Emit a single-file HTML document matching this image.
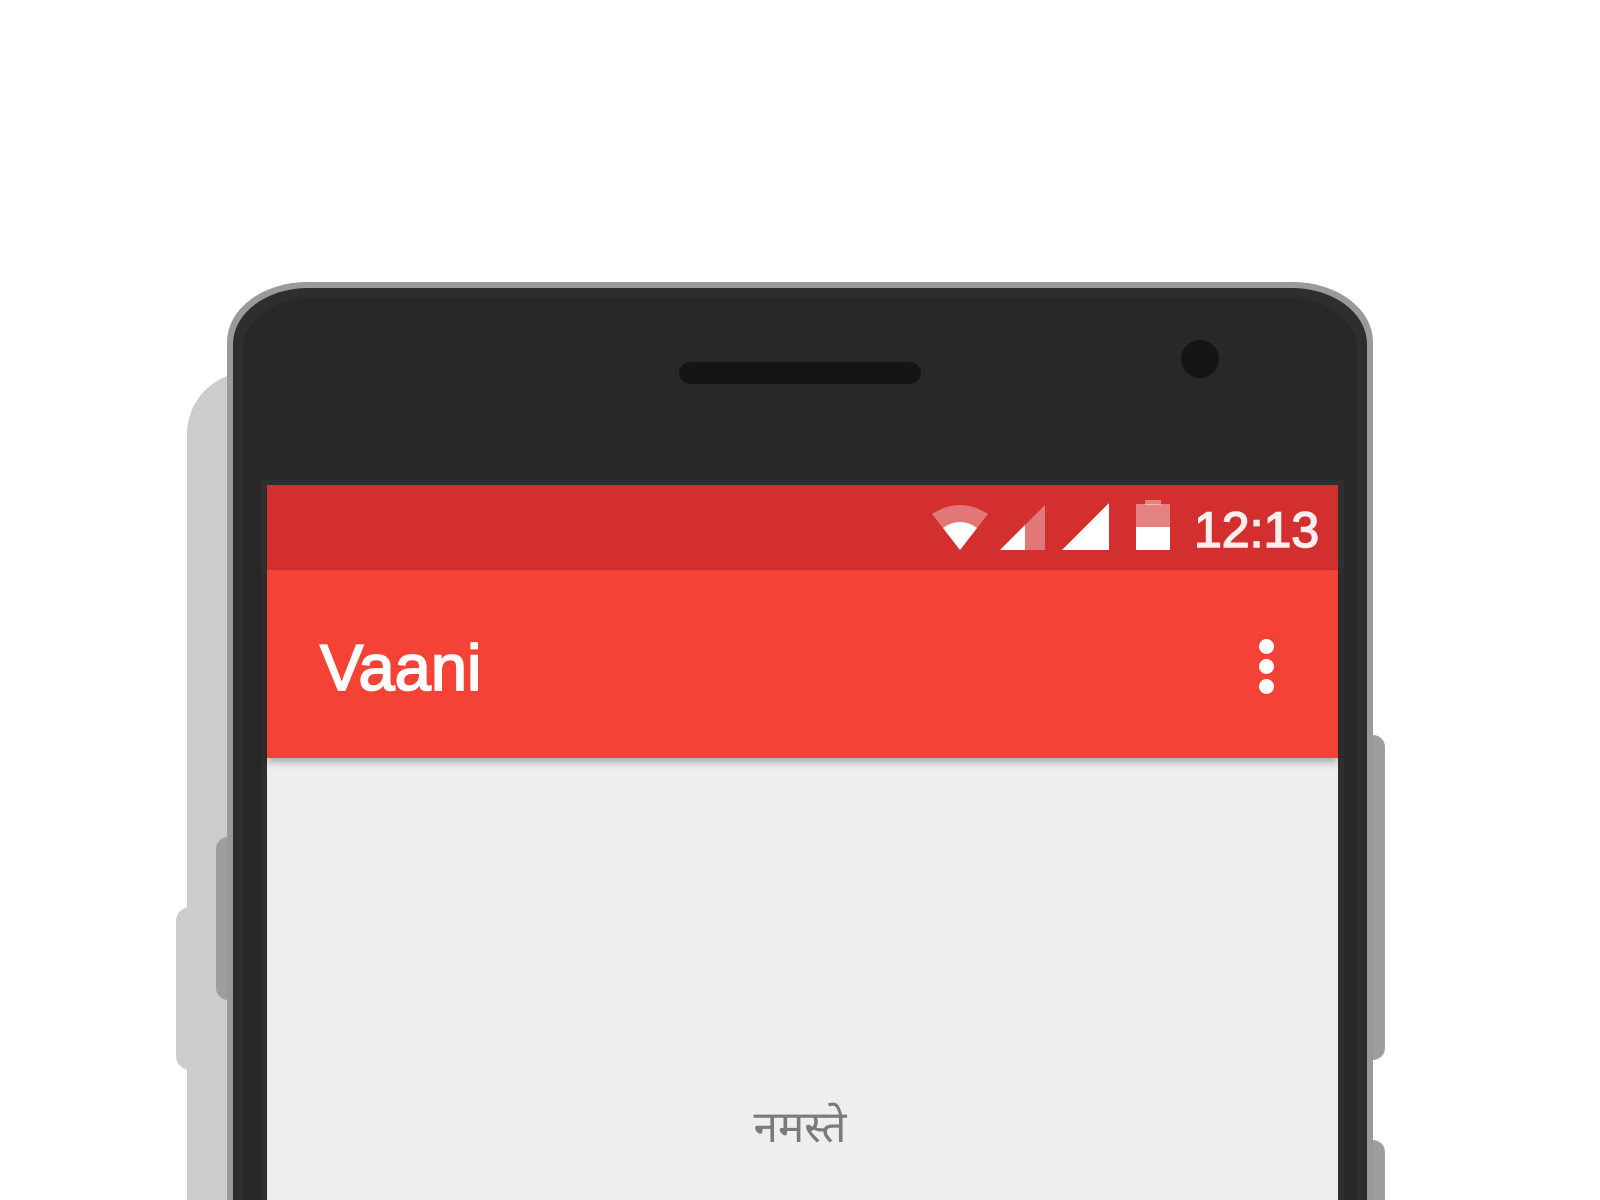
<!DOCTYPE html>
<html><head><meta charset="utf-8"><style>
html,body{margin:0;padding:0;width:1600px;height:1200px;overflow:hidden;background:#fff;position:relative;font-family:"Liberation Sans",sans-serif}
div{position:absolute;box-sizing:border-box}
</style></head><body>
<div style="left:187px;top:372px;width:300px;height:828px;background:#cccccc;border-radius:62px 0 0 0"></div>
<div style="left:176px;top:907px;width:40px;height:163px;background:#cccccc;border-radius:14px"></div>
<div style="left:216px;top:837px;width:30px;height:163px;background:#9e9e9e;border-radius:12px"></div>
<div style="left:1350px;top:735px;width:35px;height:325px;background:#9e9e9e;border-radius:12px"></div>
<div style="left:1350px;top:1140px;width:35px;height:60px;background:#9e9e9e;border-radius:12px 12px 0 0"></div>
<div style="left:227px;top:282px;width:1146px;height:918px;background:#9a9a9a;border-radius:80px 80px 0 0/60px 60px 0 0"></div>
<div style="left:233px;top:288px;width:1134px;height:912px;background:#2e2e2e;border-radius:75px 75px 0 0/56px 56px 0 0"></div>
<div style="left:243px;top:298px;width:1114px;height:902px;background:#282828;border-radius:68px 68px 0 0/50px 50px 0 0"></div>
<div style="left:679px;top:362px;width:242px;height:22px;background:#151515;border-radius:11px"></div>
<div style="left:1181px;top:340px;width:38px;height:38px;background:#151515;border-radius:50%"></div>
<div style="left:261px;top:480px;width:1083px;height:720px;background:#2f2f2f"></div>
<div style="left:267px;top:485px;width:1071px;height:715px;background:#eeeeee"></div>
<div style="left:267px;top:485px;width:1071px;height:85px;background:#d32f2f"></div>
<div style="left:267px;top:570px;width:1071px;height:188px;background:#f44336;box-shadow:0 4px 8px rgba(0,0,0,0.3)"></div>
<svg style="position:absolute;left:930px;top:500px" width="260" height="55" viewBox="0 0 260 55">
<path d="M2 14 Q30 -4 58 14 L30 50 Z" fill="#fff" fill-opacity="0.35"/>
<path d="M13 28 Q30 16 47 28 L30 50 Z" fill="#fff"/>
<path d="M70 50 L115 5 L115 50 Z" fill="#fff" fill-opacity="0.35"/>
<path d="M70 50 L95 25 L95 50 Z" fill="#fff"/>
<path d="M132 50 L179 3 L179 50 Z" fill="#fff"/>
<rect x="206" y="4" width="34" height="46" fill="#fff" fill-opacity="0.4"/>
<rect x="215" y="0" width="16" height="5" fill="#fff" fill-opacity="0.4"/>
<rect x="206" y="27" width="34" height="23" fill="#fff"/>
</svg>
<div style="left:1194px;top:502px;font-size:50px;line-height:56px;-webkit-text-stroke:1.5px #fff;color:#fff;opacity:0.92">12:13</div>
<div style="left:320px;top:630px;font-size:65px;line-height:76px;-webkit-text-stroke:1.8px #fff;color:#fff">Vaani</div>
<div style="left:1259px;top:639px;width:15px;height:15px;border-radius:50%;background:#fff"></div>
<div style="left:1259px;top:659px;width:15px;height:15px;border-radius:50%;background:#fff"></div>
<div style="left:1259px;top:679px;width:15px;height:15px;border-radius:50%;background:#fff"></div>
<div style="left:600px;top:1098px;width:400px;text-align:center;font-size:44px;line-height:60px;color:#7a7a7a;font-family:'Liberation Sans','Noto Sans CJK SC',sans-serif">नमस्ते</div>
</body></html>
